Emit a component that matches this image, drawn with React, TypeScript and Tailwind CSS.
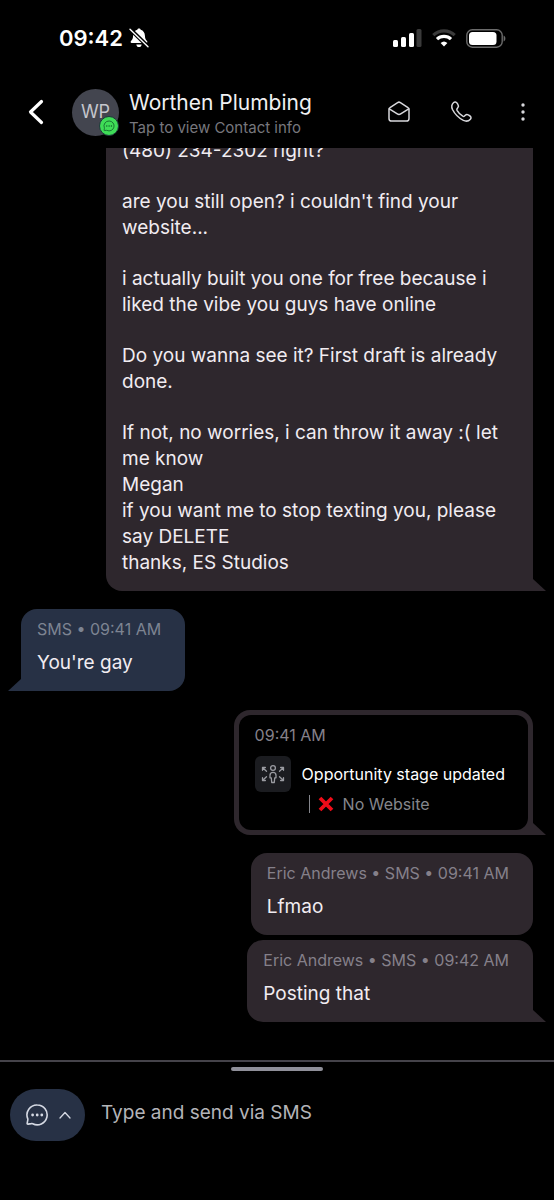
import type { ReactNode } from "react";

const pitch = [
  "(480) 234-2302 right?",
  "are you still open? i couldn't find your\nwebsite...",
  "i actually built you one for free because i\nliked the vibe you guys have online",
  "Do you wanna see it? First draft is already\ndone.",
  "If not, no worries, i can throw it away :( let\nme know\nMegan\nif you want me to stop texting you, please\nsay DELETE\nthanks, ES Studios",
];

const replies = [
  { meta: "Eric Andrews • SMS • 09:41 AM", text: "Lfmao", tail: false },
  { meta: "Eric Andrews • SMS • 09:42 AM", text: "Posting that", tail: true },
];

function ChatIcon({ className }: { className: string }) {
  return (
    <svg viewBox="0 0 24 24" className={className} fill="none" stroke="currentColor" strokeWidth="1.6" strokeLinejoin="round" aria-hidden="true">
      <path d="M12.3 2a9.9 9.9 0 1 1-4.6 18.700c-.5-.25-.9-.2-1.300-.1l-3.300.5c-.7.1-1.100-.3-.9-1l.6-3.200c.1-.5.1-.8-.1-1.300A9.900 9.900 0 0 1 12.300 2Z" />
      <g fill="currentColor" stroke="none">
        <circle cx="7.6" cy="12" r="1.4" />
        <circle cx="12.2" cy="12" r="1.4" />
        <circle cx="16.8" cy="12" r="1.4" />
      </g>
    </svg>
  );
}

function Tail({ side }: { side: "left" | "right" }) {
  return side === "right" ? (
    <svg viewBox="0 0 13 12" className="absolute bottom-0 left-full w-[13px] h-3 fill-[#2e272d]" aria-hidden="true">
      <path d="M0 0L13 12H0Z" />
    </svg>
  ) : (
    <svg viewBox="0 0 13 12" className="absolute bottom-0 right-full w-[13px] h-3 fill-[#273145]" aria-hidden="true">
      <path d="M13 0L0 12H13Z" />
    </svg>
  );
}

function Bubble({ meta, tail, children }: { meta: string; tail: boolean; children: ReactNode }) {
  return (
    <div className={`relative self-end rounded-2xl bg-[#2e272d] pl-4 pr-6 pt-[10px] pb-[15px] ${tail ? "rounded-br-none" : ""}`}>
      <p className="text-base leading-5 text-[#85808a]">{meta}</p>
      <p className="mt-[11px] text-[19px] leading-[26px]">{children}</p>
      {tail && <Tail side="right" />}
    </div>
  );
}

function StatusBar() {
  return (
    <div className="flex h-[76px] shrink-0 items-center justify-between pl-[59px] pr-12">
      <div className="flex items-center gap-[6px]">
        <span className="text-[22px] leading-7 font-semibold text-white">09:42</span>
        <svg viewBox="0 0 20 20" className="w-5 h-5" aria-hidden="true">
          <path d="M10 .5c.9 0 1.500.5 1.700 1.300C14.400 2.600 15.800 4.800 15.900 7.600c.1 3.300.8 4.200 2.100 5.400.8.8.4 2-.7 2H2.700c-1.100 0-1.500-1.200-.7-2 1.300-1.200 2-2.100 2.100-5.400.1-2.800 1.500-5 4.200-5.800C8.500 1 9.100.5 10 .5Z" fill="#fff" />
          <path d="M7.300 16.500h5.400c-.2 1.600-1.300 2.600-2.700 2.600s-2.500-1-2.700-2.600Z" fill="#fff" />
          <path d="M1 1l18 17.500" stroke="#000" strokeWidth="4" />
          <path d="M1 1.200l18 17.500" stroke="#fff" strokeWidth="1.400" strokeLinecap="round" />
        </svg>
      </div>
      <div className="flex items-center gap-[10px]">
        <svg viewBox="0 0 29 18" className="w-[29px] h-[18px]" fill="#fff" aria-hidden="true">
          <rect x="0" y="11" width="5" height="7" rx="1.500" />
          <rect x="8" y="8" width="5" height="10" rx="1.500" />
          <rect x="16" y="4" width="5" height="14" rx="1.500" />
          <rect x="23.500" y="0" width="5" height="18" rx="1.500" fill="#3a3a3a" />
        </svg>
        <svg viewBox="0 0 24 18" className="w-6 h-[18px]" fill="none" aria-hidden="true">
          <path d="M1.300 6.200a15.500 15.500 0 0 1 21.400 0" stroke="#3a3a3a" strokeWidth="3.200" />
          <path d="M5 10.200a10 10 0 0 1 14 0" stroke="#fff" strokeWidth="3.200" />
          <path d="M12 17.500l-3.400-3.400a5 5 0 0 1 6.800 0Z" fill="#fff" />
        </svg>
        <svg viewBox="0 0 40 19" className="w-10 h-[19px]" aria-hidden="true">
          <rect x=".8" y=".8" width="35.400" height="17.400" rx="5.500" fill="none" stroke="#6b6b6b" strokeWidth="1.400" />
          <rect x="3" y="3" width="27.500" height="13" rx="3.500" fill="#fff" />
          <path d="M37.600 6.500c2.400.7 2.400 5.300 0 6Z" fill="#6b6b6b" />
        </svg>
      </div>
    </div>
  );
}

function Header() {
  return (
    <header className="flex h-[72px] shrink-0 items-center pl-6 pr-[19px]">
      <button type="button" aria-label="Back" className="flex w-6 justify-center text-white">
        <svg viewBox="0 0 16 26" className="w-4 h-[26px]" fill="none" stroke="currentColor" strokeWidth="3.200" strokeLinecap="round" strokeLinejoin="round">
          <path d="M13.500 2.500L2.500 13L13.500 23.500" />
        </svg>
      </button>
      <div className="relative ml-6 flex w-[47px] h-[47px] items-center justify-center rounded-full bg-[#43454f] text-lg text-[#c5c6cc]">
        WP
        <span className="absolute bottom-0 right-0 flex w-5 h-5 items-center justify-center rounded-full border border-[#1c3a3a] bg-[#3fdc57] text-[#0f5a2a]">
          <ChatIcon className="w-3 h-3" />
        </span>
      </div>
      <div className="ml-[10px] flex-1 pt-[6px]">
        <h1 className="text-[21px] leading-[26px] text-[#f0f0f2]">Worthen Plumbing</h1>
        <p className="text-[15px] leading-6 text-[#77777d]">Tap to view Contact info</p>
      </div>
      <div className="flex items-center text-[#d8d8dc]">
        <button type="button" aria-label="Email">
          <svg viewBox="0 0 24 24" className="w-6 h-6" fill="none" stroke="currentColor" strokeWidth="1.500" strokeLinecap="round" strokeLinejoin="round">
            <path d="M2 9.300c0-.8.3-1.300 1-1.700l7.600-5c.9-.6 1.900-.6 2.800 0l7.600 5c.7.4 1 .9 1 1.700v9.200c0 1.700-.9 2.600-2.600 2.600H4.600C2.900 21.100 2 20.200 2 18.500Z" />
            <path d="M2.300 8.800l8 5.100c1.200.8 2.200.8 3.400 0l8-5.100" />
          </svg>
        </button>
        <button type="button" aria-label="Call" className="ml-[38px]">
          <svg viewBox="0 0 24 24" className="w-6 h-6" fill="none" stroke="currentColor" strokeWidth="1.500" strokeLinecap="round" strokeLinejoin="round">
            <path d="M8.200 8.600c-.5.500-.5 1-.2 1.700a17 17 0 0 0 5.800 5.900c.7.400 1.200.3 1.700-.2l.8-.8c.9-.9 2-1 3-.3l1.700 1.100c1.200.8 1.300 2.200.4 3.200-2 2.200-4.200 2.500-7 1.200A25 25 0 0 1 3.500 9.500c-1.300-2.800-1-5 1.200-7 1-.9 2.400-.7 3.200.4L9 4.700c.7 1 .6 2.100-.2 3Z" />
          </svg>
        </button>
        <button type="button" aria-label="More" className="ml-[38px]">
          <svg viewBox="0 0 24 24" className="w-6 h-6" fill="currentColor">
            <circle cx="12" cy="5" r="1.700" />
            <circle cx="12" cy="12" r="1.700" />
            <circle cx="12" cy="19" r="1.700" />
          </svg>
        </button>
      </div>
    </header>
  );
}

function StageCard() {
  return (
    <div className="relative mt-[19px] self-end rounded-2xl rounded-br-none bg-[#2e272d] p-[5px]">
      <div className="rounded-xl bg-black pl-4 pr-[23px] pt-[10px] pb-[10px]">
        <p className="text-base leading-5 text-[#85808a]">09:41 AM</p>
        <div className="mt-[11px] flex gap-[11px]">
          <div className="flex w-9 h-9 items-center justify-center rounded-md bg-[#1b1c20] text-[#9a9ba1]">
            <svg viewBox="0 0 24 20" className="w-6 h-5" fill="none" stroke="currentColor" strokeWidth="1.300" strokeLinecap="round" strokeLinejoin="round" aria-hidden="true">
              <circle cx="12" cy="4" r="2.400" />
              <path d="M12 8.300c-2 0-3 1.200-3 3v2.500h1.300l.4 4.700h2.600l.4-4.700H15v-2.500c0-1.800-1-3-3-3Z" />
              <path d="M1.500 6.300V3.500h2.900M1.700 3.700l3.800 3.500M22.500 6.300V3.500h-2.900M22.300 3.700l-3.800 3.500M1.500 13.700v2.800h2.900M1.700 16.300l3.800-3.500M22.500 13.700v2.800h-2.900M22.300 16.300l-3.800-3.500" />
            </svg>
          </div>
          <div className="pt-1">
            <p className="text-base leading-7 text-white">Opportunity stage updated</p>
            <div className="flex h-8 items-center pl-[7px] text-base text-[#85868c]">
              <span className="w-px h-[18px] bg-[#85868c]" />
              <svg viewBox="0 0 16 16" className="ml-2 w-4 h-4" aria-hidden="true">
                <path d="M2 2l12 12M14 2l-12 12" stroke="#f00c18" strokeWidth="3.800" />
              </svg>
              <span className="ml-[9px]">No Website</span>
            </div>
          </div>
        </div>
      </div>
      <Tail side="right" />
    </div>
  );
}

export default function App() {
  return (
    <div className="flex h-screen flex-col overflow-hidden bg-black font-['Inter',sans-serif] text-[#f1ecf1]">
      <StatusBar />
      <Header />

      <main className="flex min-h-0 flex-1 flex-col justify-end overflow-hidden px-[21px] pb-[38px]">
        <div className="relative ml-[85px] flex flex-col gap-[25px] rounded-bl-2xl bg-[#2e272d] px-4 pt-4 pb-[15px] text-[19px] leading-[26px]">
          {pitch.map((p) => (
            <p key={p} className="whitespace-pre-line">{p}</p>
          ))}
          <Tail side="right" />
        </div>

        <div className="relative mt-[18px] self-start rounded-2xl rounded-bl-none bg-[#273145] pl-4 pr-6 pt-[10px] pb-[15px]">
          <p className="text-base leading-5 text-[#7d8492]">SMS • 09:41 AM</p>
          <p className="mt-[11px] text-[19px] leading-[26px]">You're gay</p>
          <Tail side="left" />
        </div>

        <StageCard />

        <div className="mt-[18px] flex flex-col gap-[5px]">
          {replies.map((r) => (
            <Bubble key={r.text} meta={r.meta} tail={r.tail}>{r.text}</Bubble>
          ))}
        </div>
      </main>

      <footer className="shrink-0 border-t-2 border-[#45434a] pt-[5px] pb-[59px]">
        <div className="mx-auto w-[92px] h-1 rounded-full bg-[#8f8f99]" />
        <div className="mt-[18px] flex items-center px-[10px]">
          <button type="button" aria-label="Message type" className="flex w-[75px] h-[52px] items-center justify-center gap-[10px] rounded-full bg-[#273145] text-[#d5d9e3]">
            <ChatIcon className="w-6 h-6" />
            <svg viewBox="0 0 12 8" className="w-3 h-2" fill="none" stroke="currentColor" strokeWidth="1.300" strokeLinecap="round" strokeLinejoin="round">
              <path d="M1 7l5-5.500L11 7" />
            </svg>
          </button>
          <input
            type="text"
            aria-label="Message"
            placeholder="Type and send via SMS"
            className="ml-4 min-w-0 flex-1 bg-transparent pb-1 text-[19px] text-[#f1ecf1] outline-none placeholder:text-[#b4b4b8]"
          />
        </div>
      </footer>
    </div>
  );
}
